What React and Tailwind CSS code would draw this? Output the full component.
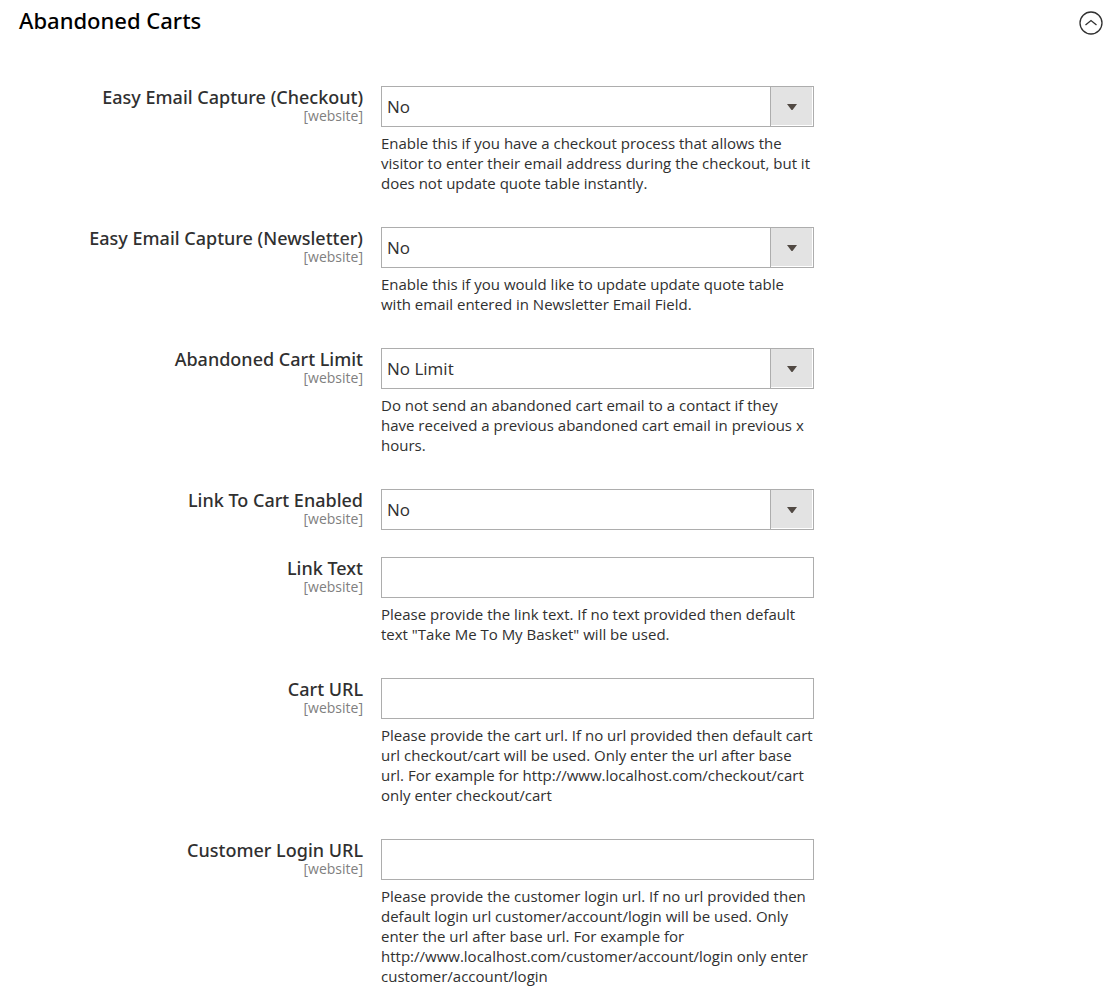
import React from "react";

const fields = [
  { id: "checkout", label: "Easy Email Capture (Checkout)", type: "select", value: "No", note: "Enable this if you have a checkout process that allows the visitor to enter their email address during the checkout, but it does not update quote table instantly." },
  { id: "newsletter", label: "Easy Email Capture (Newsletter)", type: "select", value: "No", note: "Enable this if you would like to update update quote table with email entered in Newsletter Email Field." },
  { id: "limit", label: "Abandoned Cart Limit", type: "select", value: "No Limit", note: "Do not send an abandoned cart email to a contact if they have received a previous abandoned cart email in previous x hours." },
  { id: "link-enabled", label: "Link To Cart Enabled", type: "select", value: "No" },
  { id: "link-text", label: "Link Text", type: "text", note: "Please provide the link text. If no text provided then default text \"Take Me To My Basket\" will be used." },
  { id: "cart-url", label: "Cart URL", type: "text", note: "Please provide the cart url. If no url provided then default cart url checkout/cart will be used. Only enter the url after base url. For example for http://www.localhost.com/checkout/cart only enter checkout/cart" },
  { id: "login-url", label: "Customer Login URL", type: "text", note: "Please provide the customer login url. If no url provided then default login url customer/account/login will be used. Only enter the url after base url. For example for http://www.localhost.com/customer/account/login only enter customer/account/login" },
];

function SelectBox({ id, value }) {
  return (
    <div className="relative">
      <select id={id} defaultValue={value} className="block h-[41px] w-full appearance-none rounded-none border border-[#adadad] bg-white pr-12 pl-[5px] text-[17px] text-[#303030]">
        <option>{value}</option>
      </select>
      <span className="pointer-events-none absolute inset-y-0 right-0 flex w-11 border border-[#adadad] bg-white pr-px pb-px">
        <span className="flex flex-1 items-center justify-center bg-[#e3e3e3] pt-[3px]">
          <svg width="10" height="7" viewBox="0 0 10 7" aria-hidden="true"><path d="M0 0h10L5.5 6h-1z" fill="#514943" /></svg>
        </span>
      </span>
    </div>
  );
}

function Field({ id, label, type, value, note }) {
  return (
    <div className="grid grid-cols-[363fr_433fr_287fr] gap-x-[18px]">
      <label htmlFor={id} className="pt-px text-right font-['Noto_Sans','Open_Sans',sans-serif] text-lg leading-5 font-medium text-[#303030]">
        {label}
        <span className="block font-['Open_Sans',sans-serif] text-sm leading-[18px] font-normal text-[#808080]">[website]</span>
      </label>
      <div className="min-w-0">
        {type === "select" ? (
          <SelectBox id={id} value={value} />
        ) : (
          <input id={id} type="text" className="block h-[41px] w-full border border-[#adadad] bg-white px-1.5 text-[17px] text-[#303030]" />
        )}
        {note && <p className="mt-1.5 pb-[7px] text-[15px] leading-5 text-[#303030]">{note}</p>}
      </div>
    </div>
  );
}

export default function App() {
  return (
    <section className="bg-white pb-5 font-['Open_Sans',sans-serif]">
      <header className="flex items-start justify-between pt-1.5 pr-4 pl-[19px]">
        <h2 className="font-['Noto_Sans','Open_Sans',sans-serif] text-[22px] leading-7 font-medium text-black">Abandoned Carts</h2>
        <button type="button" aria-label="Collapse section" className="mt-[5px]">
          <svg width="24" height="24" viewBox="0 0 24 24" fill="none" stroke="#303030" aria-hidden="true">
            <circle cx="12" cy="12" r="11" strokeWidth="1.3" />
            <path d="M6.5 14 12 9.5l5.5 4.5" strokeWidth="1.3" />
          </svg>
        </button>
      </header>
      <div className="mt-[51px] flex flex-col gap-[27px]">
        {fields.map((field) => <Field key={field.id} {...field} />)}
      </div>
    </section>
  );
}
